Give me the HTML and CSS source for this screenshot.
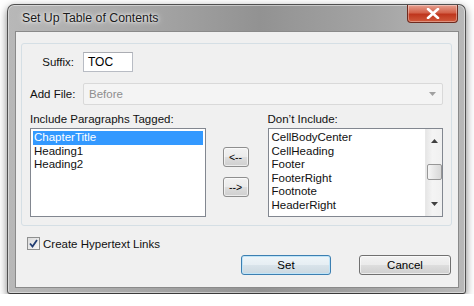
FILE: index.html
```html
<!DOCTYPE html>
<html lang="en">
<head>
  <meta charset="UTF-8">
  <title>Set Up Table of Contents</title>
  <link rel="stylesheet" href="styles.css">
</head>
<body>
  <div class="window">
    <div class="titlebar">
      <span class="title">Set Up Table of Contents</span>
      <span class="close">
        <svg width="14" height="11" viewBox="0 0 14 11"><path d="M2 1 L12 10 M12 1 L2 10" stroke="#fff" stroke-width="2.6" stroke-linecap="round"/></svg>
      </span>
    </div>
    <div class="client">
      <div class="group">
        <div class="field-row">
          <span class="field-label">Suffix:</span>
          <span class="text-input">TOC</span>
        </div>
        <div class="field-row field-row-select">
          <span class="field-label">Add File:</span>
          <div class="select">
            <span class="select-value">Before</span>
            <svg class="select-arrow" width="7" height="4" viewBox="0 0 7 4"><path d="M0 0 H7 L3.5 4 Z" fill="#a0a0a0"/></svg>
          </div>
        </div>
        <div class="lists">
          <div class="list-col">
            <div class="list-label">Include Paragraphs Tagged:</div>
            <ul class="listbox">
              <li class="selected">ChapterTitle</li>
              <li>Heading1</li>
              <li>Heading2</li>
            </ul>
          </div>
          <div class="move-buttons">
            <span class="btn small">&lt;--</span>
            <span class="btn small">--&gt;</span>
          </div>
          <div class="list-col">
            <div class="list-label">Don’t Include:</div>
            <div class="listbox listbox-scroll">
              <ul class="items">
                <li>CellBodyCenter</li>
                <li>CellHeading</li>
                <li>Footer</li>
                <li>FooterRight</li>
                <li>Footnote</li>
                <li>HeaderRight</li>
              </ul>
              <div class="scrollbar">
                <svg width="7" height="4" viewBox="0 0 7 4"><path d="M0 4 H7 L3.5 0 Z" fill="#404040"/></svg>
                <span class="thumb"></span>
                <svg width="7" height="4" viewBox="0 0 7 4"><path d="M0 0 H7 L3.5 4 Z" fill="#404040"/></svg>
              </div>
            </div>
          </div>
        </div>
      </div>
      <div class="check-row">
        <span class="checkbox">
          <svg width="9" height="9" viewBox="0 0 9 9"><path d="M1 4.5 L3.5 7.5 L8 1" fill="none" stroke="#213d73" stroke-width="1.8"/></svg>
        </span>
        <span>Create Hypertext Links</span>
      </div>
      <div class="actions">
        <span class="btn default">Set</span>
        <span class="btn cancel">Cancel</span>
      </div>
    </div>
  </div>
</body>
</html>
```
FILE: styles.css
```css
html, body {
  margin: 0;
  background: #ffffff;
}

body {
  font-family: "Liberation Sans", Arial, sans-serif;
  font-size: 11.5px;
  color: #111111;
}

.window {
  box-sizing: border-box;
  width: 459px;
  height: 290px;
  margin: 4px 0 0 7px;
  padding: 0 6px 5px 7px;
  border: 1px solid #505050;
  border-bottom-color: #3a3a3a;
  border-radius: 7px 7px 3px 3px;
  background: linear-gradient(to right, #b8b8b8 0%, #a6a6a6 30%, #929292 55%, #a4a4a4 80%, #b8b8b8 100%);
  box-shadow: 0 3px 9px rgba(0, 0, 0, 0.5), inset 0 0 0 1px rgba(255, 255, 255, 0.45);
}

.titlebar {
  height: 26px;
  display: flex;
  justify-content: space-between;
  align-items: flex-start;
}

.title {
  align-self: center;
  padding-left: 7px;
  font-size: 12.3px;
  color: #1b1b1b;
  text-shadow: 0 0 6px #ffffff, 0 0 3px #ffffff;
}

.close {
  width: 51px;
  height: 18px;
  margin-right: 1px;
  box-sizing: border-box;
  display: flex;
  align-items: center;
  justify-content: center;
  border: 1px solid #6e2a1e;
  border-top: none;
  border-radius: 0 0 4px 4px;
  background: linear-gradient(to bottom, #e6a090 0%, #d3624a 45%, #bf361d 55%, #d05a3c 100%);
  box-shadow: inset 0 0 0 1px rgba(255, 255, 255, 0.35);
}

.client {
  box-sizing: border-box;
  height: 257px;
  border: 1px solid #8a8a8a;
  background: #f0f0f0;
  padding: 11px 6px 0 5px;
}

.group {
  border: 1px solid #d5dfe5;
  border-radius: 3px;
  padding: 8px;
}

.field-row {
  display: flex;
  align-items: center;
  gap: 9px;
}

.field-row-select {
  margin-top: 11px;
}

.field-label {
  width: 44px;
  text-align: right;
  white-space: nowrap;
}

.field-row-select .field-label {
  text-align: left;
}

.text-input {
  box-sizing: border-box;
  width: 50px;
  height: 20px;
  padding: 0 4px;
  line-height: 18px;
  font-size: 12px;
  color: #000000;
  background: #ffffff;
  border: 1px solid #b8bcc4;
  border-top-color: #abadb3;
}

.select {
  box-sizing: border-box;
  flex: 1;
  height: 22px;
  display: flex;
  align-items: center;
  justify-content: space-between;
  padding: 0 6px 0 5px;
  background: #f4f4f4;
  border: 1px solid #d9d9d9;
  border-radius: 2px;
}

.select-value {
  color: #8e8e8e;
}

.lists {
  display: flex;
  margin-top: 8px;
}

.list-col {
  width: 176px;
}

.list-label {
  height: 15px;
  line-height: 13px;
}

.listbox {
  box-sizing: border-box;
  height: 89px;
  margin: 0;
  padding: 2px;
  list-style: none;
  background: #ffffff;
  border: 1px solid #828790;
}

.listbox li {
  line-height: 13.5px;
  padding-left: 1px;
  white-space: nowrap;
}

.listbox li.selected {
  background: #3399ff;
  color: #ffffff;
}

.listbox-scroll {
  display: flex;
  padding: 0;
}

.items {
  flex: 1;
  margin: 0;
  padding: 2px 0 0 2px;
  list-style: none;
  overflow: hidden;
}

.scrollbar {
  width: 17px;
  display: flex;
  flex-direction: column;
  align-items: center;
  justify-content: space-between;
  padding: 10px 0;
  box-sizing: border-box;
  background: linear-gradient(to right, #e6e6e6, #f4f4f4 40%, #f0f0f0);
  border-left: 1px solid #e8e8e8;
}

.scrollbar .thumb {
  box-sizing: border-box;
  width: 15px;
  height: 16px;
  margin-top: -5px;
  margin-bottom: -3px;
  border: 1px solid #979797;
  border-radius: 2px;
  background: linear-gradient(to right, #f6f6f6, #e6e6e6 50%, #d8d8d8);
}

.move-buttons {
  width: 26px;
  margin: 0 19px 0 17px;
  padding-top: 34px;
  display: flex;
  flex-direction: column;
  gap: 10px;
}

.btn {
  box-sizing: border-box;
  display: flex;
  align-items: center;
  justify-content: center;
  height: 20px;
  border: 1px solid #707070;
  border-radius: 3px;
  background: linear-gradient(to bottom, #f2f2f2 0%, #ebebeb 48%, #dddddd 52%, #cfcfcf 100%);
  box-shadow: inset 0 0 0 1px rgba(255, 255, 255, 0.6);
  color: #000000;
}

.btn.small {
  width: 26px;
  font-size: 10.5px;
  border-color: #8e8e8e;
}

.check-row {
  display: flex;
  align-items: center;
  gap: 3px;
  margin: 11px 0 0 6px;
  height: 13px;
}

.checkbox {
  box-sizing: border-box;
  width: 13px;
  height: 13px;
  display: flex;
  align-items: center;
  justify-content: center;
  border: 1px solid #8e8f8f;
  background: linear-gradient(to bottom right, #dcdcdc, #f6f6f6);
}

.actions {
  display: flex;
  justify-content: flex-end;
  gap: 28px;
  margin-top: 5px;
  padding-right: 1px;
}

.btn.default {
  width: 90px;
  border-color: #3c7fb1;
  box-shadow: inset 0 0 0 1px #bfe4f8;
  background: linear-gradient(to bottom, #eef5f9 0%, #e6eef3 48%, #d8e3ea 52%, #cbd8e0 100%);
}

.btn.cancel {
  width: 92px;
}
```
